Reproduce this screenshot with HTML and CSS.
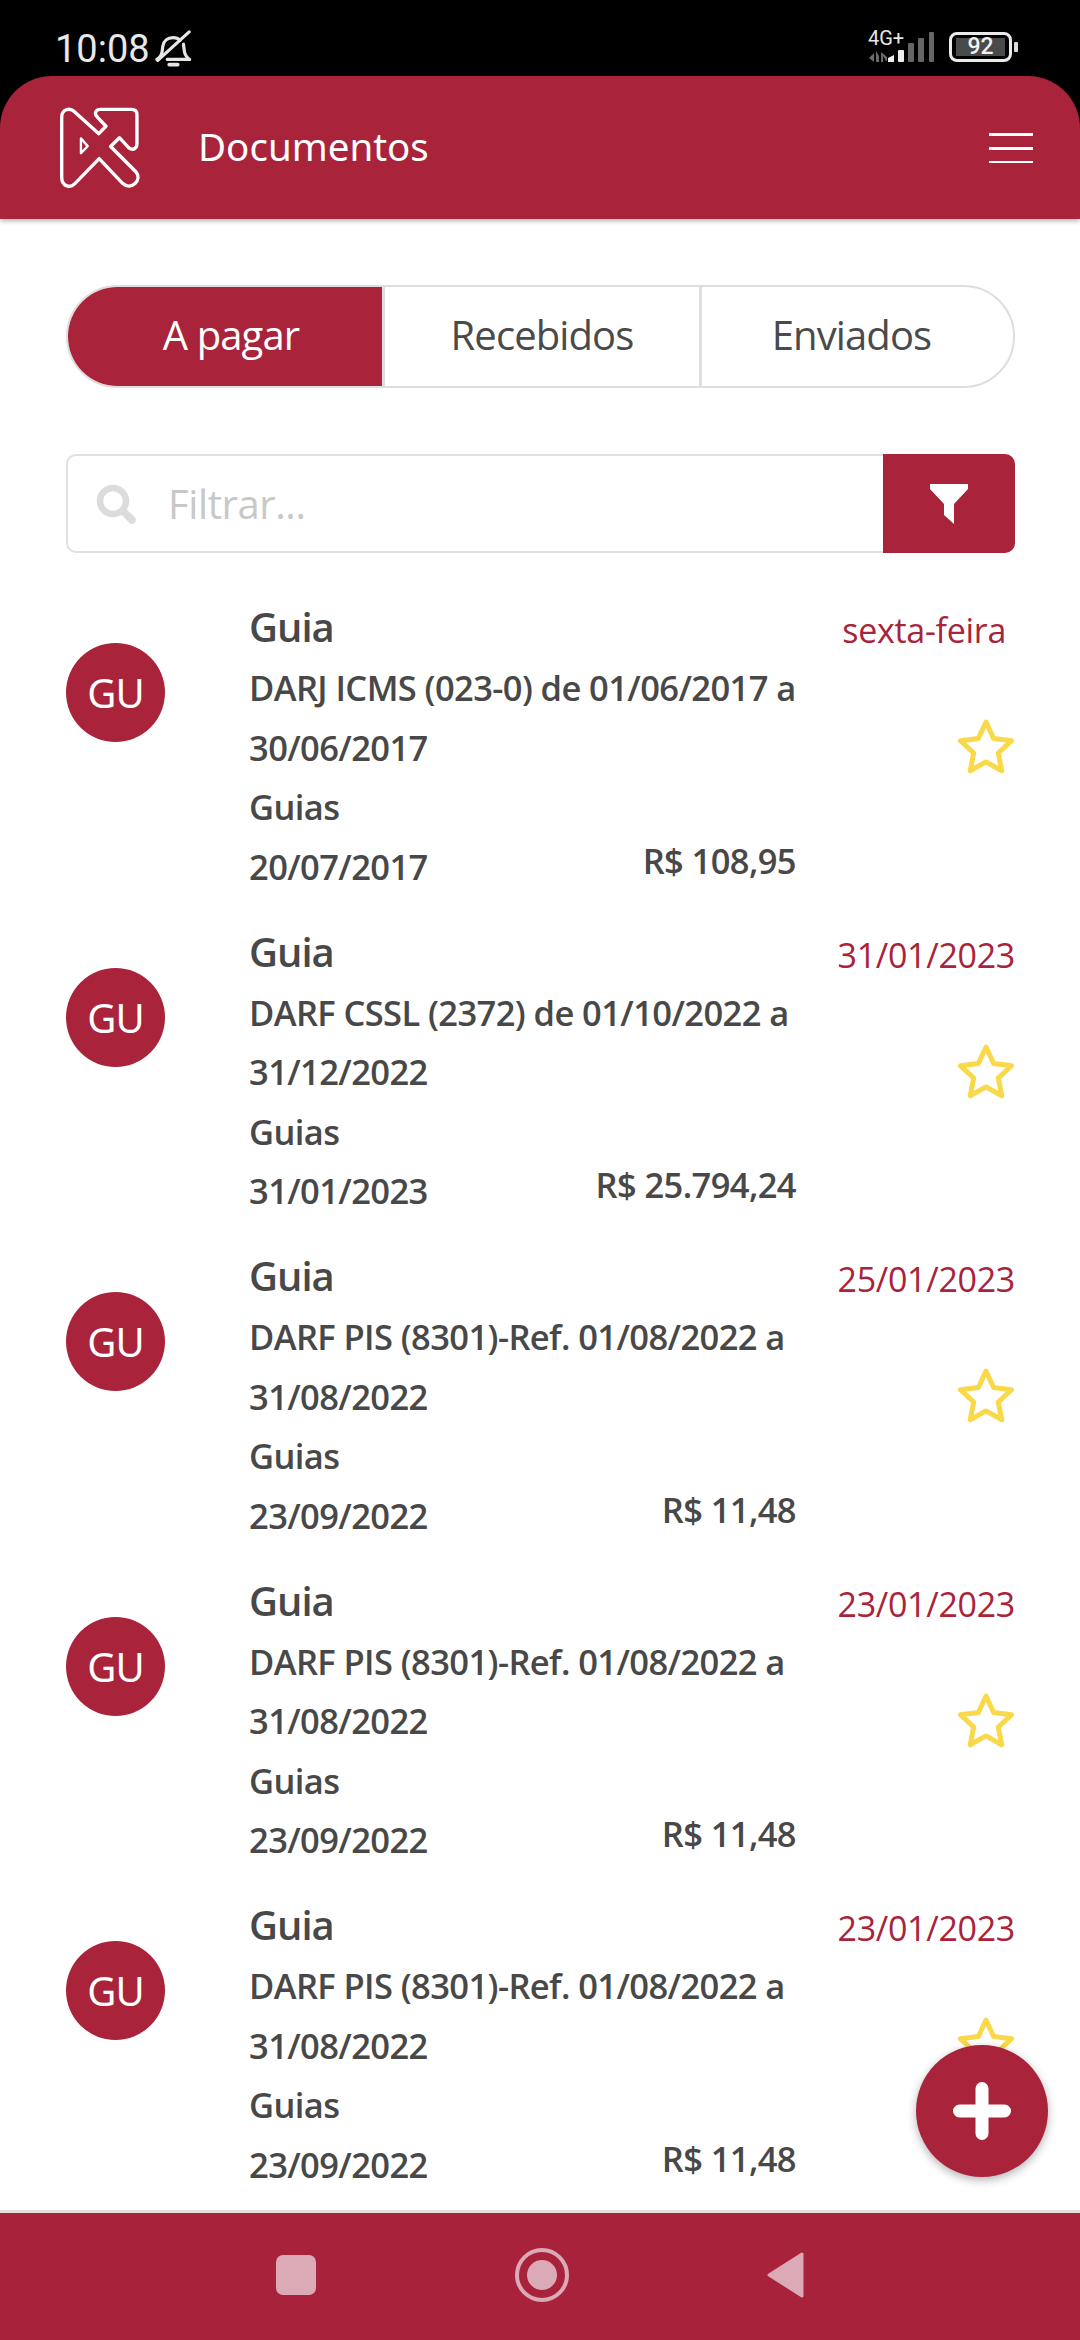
FILE: index.html
```html
<!DOCTYPE html>
<html lang="pt-BR">
<head>
<meta charset="utf-8">
<title>Documentos</title>
<link rel="stylesheet" href="styles.css">
</head>
<body>
<div class="phone">
  <div class="status">
    <div class="status-left">
      <span class="time">10:08</span>
      <svg class="bell" viewBox="0 0 40 40" fill="none" stroke="#e6e6e6" stroke-width="3.400" stroke-linecap="round" stroke-linejoin="round">
        <path d="M3 31c3-2 5-4 5.500-8l.8-6c.8-5.500 5-9 10.700-9 3 0 5.500 1 7.500 3"/>
        <path d="M31 15l1 7.500c.5 4 2.800 6.500 5.500 8.500H14"/>
        <path d="M4 32L37 2"/>
        <path d="M16 36.500h9" stroke-width="3.800"/>
      </svg>
    </div>
    <div class="status-right">
      <svg class="signal" viewBox="0 -3 70 36">
        <text x="0" y="15" class="net">4G+</text>
        <path d="M1 28l5-5v9zM8 21v11h3v-6zM13 22v10l2 0v-6l3 5h1v-4z" fill="#6a6a6a"/>
        <path d="M20 32v-4l6-3v7z" fill="#eee"/>
        <rect x="30" y="20" width="6" height="12" rx="1" fill="#eee"/>
        <rect x="40" y="13" width="6" height="19" rx="1" fill="#666"/>
        <rect x="50" y="8" width="6" height="24" rx="1" fill="#666"/>
        <rect x="61" y="2" width="5" height="30" rx="1" fill="#666"/>
      </svg>
      <div class="battery">
        <span class="battery-level">92</span>
      </div>
      <span class="battery-tip"></span>
    </div>
  </div>

  <header class="topbar">
    <svg class="logo" viewBox="28 23 238 240" fill="none" stroke="#fff" stroke-width="10" stroke-linejoin="round">
      <path d="M72 36C58 24 36 30 35 52V232C35 256 58 266 74 250L146 176L216 250C240 272 276 240 254 214L180 140L206 114L234 144C244 152 258 148 258 132V46C258 36 252 30 242 30H150C136 30 130 42 140 52L166 80L145 102Z"/>
      <path d="M92 116L112 139L92 160Z" stroke-width="7"/>
    </svg>
    <h1 class="title">Documentos</h1>
    <div class="menu"><i class="m1"></i><i class="m2"></i><i class="m3"></i></div>
  </header>

  <main class="content">
    <nav class="tabs">
      <div class="tab active">A pagar</div>
      <div class="tab">Recebidos</div>
      <div class="tab">Enviados</div>
    </nav>

    <div class="filter">
      <div class="filter-input">
        <svg class="search" viewBox="0 0 40 40" fill="none" stroke="#dcdcdc" stroke-width="6.500" stroke-linecap="round">
          <circle cx="17" cy="17" r="13"/>
          <path d="M27 27l9 9" stroke-width="7.500"/>
        </svg>
        <span class="placeholder">Filtrar...</span>
      </div>
      <div class="filter-btn">
        <svg class="funnel" viewBox="0 0 40 40"><path d="M1 0H39V5L25 20V40L15 31V20L1 5Z" fill="#fff"/></svg>
      </div>
    </div>

    <section class="list">
      <article class="row">
        <div class="avatar">GU</div>
        <div class="info">
          <div class="doc-title">Guia</div>
          <div class="doc-line">DARJ ICMS (023-0) de 01/06/2017 a 30/06/2017</div>
          <div class="doc-line">Guias</div>
          <div class="doc-foot"><span>20/07/2017</span><span class="amount">R$ 108,95</span></div>
        </div>
        <div class="side">
          <div class="when first">sexta-feira</div>
          <svg class="star" viewBox="0 0 58 56"><path d="M29 4l7.600 16.500 18 2.200-13.300 12.300 3.500 17.800L29 43.900 13.200 52.800l3.500-17.800L3.400 22.700l18-2.200z"/></svg>
        </div>
      </article>
      <article class="row">
        <div class="avatar">GU</div>
        <div class="info">
          <div class="doc-title">Guia</div>
          <div class="doc-line">DARF CSSL (2372) de 01/10/2022 a 31/12/2022</div>
          <div class="doc-line">Guias</div>
          <div class="doc-foot"><span>31/01/2023</span><span class="amount">R$ 25.794,24</span></div>
        </div>
        <div class="side">
          <div class="when">31/01/2023</div>
          <svg class="star" viewBox="0 0 58 56"><path d="M29 4l7.600 16.500 18 2.200-13.300 12.300 3.500 17.800L29 43.900 13.200 52.800l3.500-17.800L3.400 22.700l18-2.200z"/></svg>
        </div>
      </article>
      <article class="row">
        <div class="avatar">GU</div>
        <div class="info">
          <div class="doc-title">Guia</div>
          <div class="doc-line">DARF PIS (8301)-Ref. 01/08/2022 a 31/08/2022</div>
          <div class="doc-line">Guias</div>
          <div class="doc-foot"><span>23/09/2022</span><span class="amount">R$ 11,48</span></div>
        </div>
        <div class="side">
          <div class="when">25/01/2023</div>
          <svg class="star" viewBox="0 0 58 56"><path d="M29 4l7.600 16.500 18 2.200-13.300 12.300 3.500 17.800L29 43.900 13.200 52.800l3.500-17.800L3.400 22.700l18-2.200z"/></svg>
        </div>
      </article>
      <article class="row">
        <div class="avatar">GU</div>
        <div class="info">
          <div class="doc-title">Guia</div>
          <div class="doc-line">DARF PIS (8301)-Ref. 01/08/2022 a 31/08/2022</div>
          <div class="doc-line">Guias</div>
          <div class="doc-foot"><span>23/09/2022</span><span class="amount">R$ 11,48</span></div>
        </div>
        <div class="side">
          <div class="when">23/01/2023</div>
          <svg class="star" viewBox="0 0 58 56"><path d="M29 4l7.600 16.500 18 2.200-13.300 12.300 3.500 17.800L29 43.900 13.200 52.800l3.500-17.800L3.400 22.700l18-2.200z"/></svg>
        </div>
      </article>
      <article class="row">
        <div class="avatar">GU</div>
        <div class="info">
          <div class="doc-title">Guia</div>
          <div class="doc-line">DARF PIS (8301)-Ref. 01/08/2022 a 31/08/2022</div>
          <div class="doc-line">Guias</div>
          <div class="doc-foot"><span>23/09/2022</span><span class="amount">R$ 11,48</span></div>
        </div>
        <div class="side">
          <div class="when">23/01/2023</div>
          <svg class="star" viewBox="0 0 58 56"><path d="M29 4l7.600 16.500 18 2.200-13.300 12.300 3.500 17.800L29 43.900 13.200 52.800l3.500-17.800L3.400 22.700l18-2.200z"/></svg>
        </div>
      </article>
    </section>

    <button class="fab" type="button" aria-label="Adicionar">
      <svg viewBox="0 0 60 60"><path d="M30 7.500V52.500M7.500 30H52.500" stroke="#fff" stroke-width="13" stroke-linecap="round"/></svg>
    </button>
  </main>

  <footer class="navbar">
    <span class="nav-square"></span>
    <svg class="nav-home" viewBox="0 0 54 54"><circle cx="27" cy="27" r="25" fill="none" stroke="#dca9b6" stroke-width="4"/><circle cx="27" cy="27" r="15" fill="#dca9b6"/></svg>
    <svg class="nav-back" viewBox="0 0 38 46"><path d="M35 2L2 23L35 44Z" fill="#dca9b6" stroke="#dca9b6" stroke-width="3" stroke-linejoin="round"/></svg>
  </footer>
</div>
</body>
</html>
```
FILE: styles.css
```css
* { box-sizing: border-box; }
html, body { margin: 0; padding: 0; background: #000; }
.phone {
  width: 1080px;
  height: 2340px;
  display: flex;
  flex-direction: column;
  overflow: hidden;
  background: #000;
  font-family: "Open Sans", "Noto Sans", sans-serif;
}
.status {
  height: 76px;
  flex: none;
  display: flex;
  justify-content: space-between;
  align-items: flex-start;
  padding: 0 62px 0 55px;
}
.status-left { display: flex; align-items: center; gap: 4px; padding-top: 27px; }
.time { font: 400 38px/44px Roboto, sans-serif; color: #e8e8e8; }
.bell { width: 38px; height: 38px; }
.status-right { display: flex; align-items: flex-start; padding-top: 27px; }
.signal { width: 70px; height: 36px; margin-right: 11px; }
.net { font: 400 20px Roboto, sans-serif; fill: #e6e6e6; }
.battery {
  width: 63px;
  height: 30px;
  margin-top: 5px;
  border: 3px solid #eaeaea;
  border-radius: 8px;
  padding: 3px 4px;
  display: flex;
}
.battery-level {
  flex: 1;
  background: #4a4a4a;
  color: #f0f0f0;
  font: 500 23px/18px Roboto, sans-serif;
  text-align: center;
}
.battery-tip { width: 4px; height: 10px; margin: 15px 0 0 2px; border-radius: 1px; background: #dcdcdc; }

.topbar {
  height: 143px;
  flex: none;
  background: #a9233a;
  border-radius: 52px 52px 0 0;
  display: flex;
  align-items: center;
  padding: 0 47px 0 59px;
  box-shadow: 0 2px 5px rgba(0,0,0,.3);
  position: relative;
  z-index: 2;
}
.logo { width: 81px; height: 81px; margin-right: 58px; }
.title { flex: 1; margin: 0 0 4px; font-size: 38.500px; font-weight: 400; color: #fff; line-height: 50px; font-family: "Noto Sans", sans-serif; }
.menu { display: flex; flex-direction: column; gap: 11px; width: 44px; padding-top: 1px; }
.menu i { display: block; background: #fff; }
.m1 { height: 3px; }
.m2 { height: 3px; }
.m3 { height: 2px; }

.content {
  flex: 1;
  min-height: 0;
  background: #fff;
  padding: 66px 65px 0 66px;
  position: relative;
  overflow: hidden;
}
.tabs {
  height: 103px;
  display: flex;
  border: 2px solid #dedede;
  border-radius: 52px;
  overflow: hidden;
}
.tab {
  flex: 1 1 0;
  display: flex;
  align-items: center;
  justify-content: center;
  font-size: 40px;
  letter-spacing: -0.9px;
  color: #4a4a4a;
  border-left: 3px solid #dedede;
  padding-bottom: 4px;
}
.tab:first-child { border-left: none; flex: 0 0 314px; padding-left: 12px; }
.tab:nth-child(2) { flex: 0 0 317px; }
.tab:last-child { padding-right: 12px; }
.tab.active { background: #a9233a; color: #fff; }

.filter {
  margin-top: 66px;
  height: 99px;
  display: flex;
  border: 2px solid #e0e0e0;
  border-radius: 10px;
}
.filter-input { flex: 1; display: flex; align-items: center; padding-left: 28px; }
.search { width: 40px; height: 40px; margin-right: 32px; }
.placeholder { font-size: 40px; letter-spacing: -0.4px; color: #c8c8c8; }
.filter-btn {
  width: 132px;
  margin: -2px -2px -2px 0;
  background: #a9233a;
  border-radius: 0 10px 10px 0;
  display: flex;
  align-items: center;
  justify-content: center;
}
.funnel { width: 40px; height: 40px; }

.list { margin-top: 43px; display: flex; flex-direction: column; gap: 24.500px; }
.row { display: flex; height: 300px; position: relative; }
.avatar {
  width: 99px;
  height: 99px;
  flex: none;
  margin: 47px 84px 0 0;
  border-radius: 50%;
  background: #a9233a;
  color: #fff;
  font-size: 40px;
  letter-spacing: -1px;
  font-family: "Noto Sans", sans-serif;
  display: flex;
  align-items: center;
  justify-content: center;
}
.info { width: 548px; flex: none; color: #484848; font-weight: 600; font-size: 34.500px; letter-spacing: -0.6px; line-height: 59.500px; }
.doc-title { font-size: 40px; letter-spacing: -1px; line-height: 62px; }
.doc-foot { display: flex; justify-content: space-between; }
.amount { position: relative; top: -6px; left: -1px; }
.side { flex: 1; display: flex; flex-direction: column; align-items: flex-end; }
.when { font-size: 34px; letter-spacing: -0.3px; color: #a9233a; line-height: 48px; margin-top: 10px; }
.when.first { margin-right: 9px; }
.star { width: 58px; height: 56px; margin-top: 64px; fill: none; stroke: #f9d949; stroke-width: 5; stroke-linejoin: round; }

.fab {
  position: absolute;
  right: 32px;
  bottom: 33px;
  width: 132px;
  height: 132px;
  padding: 0;
  border: none;
  border-radius: 50%;
  background: #a9233a;
  box-shadow: 0 3px 10px rgba(0,0,0,.3);
  display: flex;
  align-items: center;
  justify-content: center;
}
.fab svg { width: 60px; height: 60px; }

.navbar {
  height: 130px;
  flex: none;
  background: #a7223a;
  border-top: 3px solid #e2e0da;
  display: flex;
  align-items: center;
  justify-content: space-between;
  padding: 0 275px 3px 276px;
}
.nav-square { width: 40px; height: 40px; border-radius: 7px; background: #dca9b6; }
.nav-home { width: 54px; height: 54px; }
.nav-back { width: 38px; height: 46px; }
```
